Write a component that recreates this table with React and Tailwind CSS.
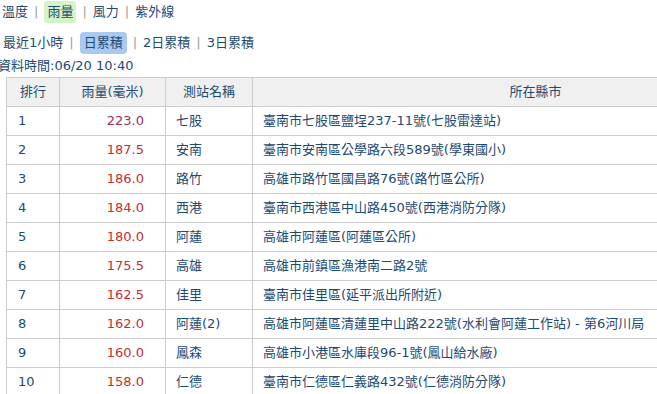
import React from 'react';

const ROWS = [
  { rank: 1, rain: '223.0', name: '七股', addr: '臺南市七股區鹽埕237-11號(七股雷達站)' },
  { rank: 2, rain: '187.5', name: '安南', addr: '臺南市安南區公學路六段589號(學東國小)' },
  { rank: 3, rain: '186.0', name: '路竹', addr: '高雄市路竹區國昌路76號(路竹區公所)' },
  { rank: 4, rain: '184.0', name: '西港', addr: '臺南市西港區中山路450號(西港消防分隊)' },
  { rank: 5, rain: '180.0', name: '阿蓮', addr: '高雄市阿蓮區(阿蓮區公所)' },
  { rank: 6, rain: '175.5', name: '高雄', addr: '高雄市前鎮區漁港南二路2號' },
  { rank: 7, rain: '162.5', name: '佳里', addr: '臺南市佳里區(延平派出所附近)' },
  { rank: 8, rain: '162.0', name: '阿蓮(2)', addr: '高雄市阿蓮區清蓮里中山路222號(水利會阿蓮工作站) - 第6河川局' },
  { rank: 9, rain: '160.0', name: '鳳森', addr: '高雄市小港區水庫段96-1號(鳳山給水廠)' },
  { rank: 10, rain: '158.0', name: '仁德', addr: '臺南市仁德區仁義路432號(仁德消防分隊)' },
];

const Sep = () => <span className="mx-[6px] text-[#a0a0a0]">|</span>;

export default function App() {
  return (
    <div
      className="w-[657px] h-[394px] overflow-hidden bg-white text-[13px] text-[#1e4a72]"
      style={{ fontFamily: '"DejaVu Sans", "Noto Sans CJK TC", sans-serif' }}
    >
      {/* element tabs */}
      <div className="flex items-center h-[24px] pl-[2px]">
        <span>溫度</span>
        <Sep />
        <span className="bg-[#d3f4c6] rounded-[3px] px-[3px] leading-[22px]">雨量</span>
        <Sep />
        <span>風力</span>
        <Sep />
        <span>紫外線</span>
      </div>

      {/* period tabs */}
      <div className="flex items-center h-[31px] pl-[3px] pt-[7px]">
        <span>最近1小時</span>
        <Sep />
        <span className="bg-[#a9c9f1] rounded-[4px] px-[4px] leading-[22px]">日累積</span>
        <Sep />
        <span>2日累積</span>
        <Sep />
        <span>3日累積</span>
      </div>

      <div className="ml-[-2px] h-[22px] leading-[22px]">資料時間:06/20 10:40</div>

      <table className="ml-[6px] w-[812px] border-collapse table-fixed">
        <colgroup>
          <col className="w-[53px]" />
          <col className="w-[106px]" />
          <col className="w-[87px]" />
          <col className="w-[566px]" />
        </colgroup>
        <thead>
          <tr className="h-[29px] bg-[#f0f0f0]">
            <th className="border border-[#cccccc] font-normal text-center">排行</th>
            <th className="border border-[#cccccc] font-normal text-center">雨量(毫米)</th>
            <th className="border border-[#cccccc] font-normal text-center">測站名稱</th>
            <th className="border border-[#cccccc] font-normal text-center">所在縣市</th>
          </tr>
        </thead>
        <tbody>
          {ROWS.map((r) => (
            <tr key={r.rank} className="h-[29px]">
              <td className="border border-[#cccccc] pl-[11px]">{r.rank}</td>
              <td className={`border border-[#cccccc] text-right pr-[21px] ${r.rank === 1 ? 'text-[#a02c5c]' : 'text-[#c62f2f]'}`}>
                {r.rain}
              </td>
              <td className="border border-[#cccccc] pl-[10px]">{r.name}</td>
              <td className="border border-[#cccccc] pl-[10px] whitespace-nowrap">{r.addr}</td>
            </tr>
          ))}
        </tbody>
      </table>
    </div>
  );
}
